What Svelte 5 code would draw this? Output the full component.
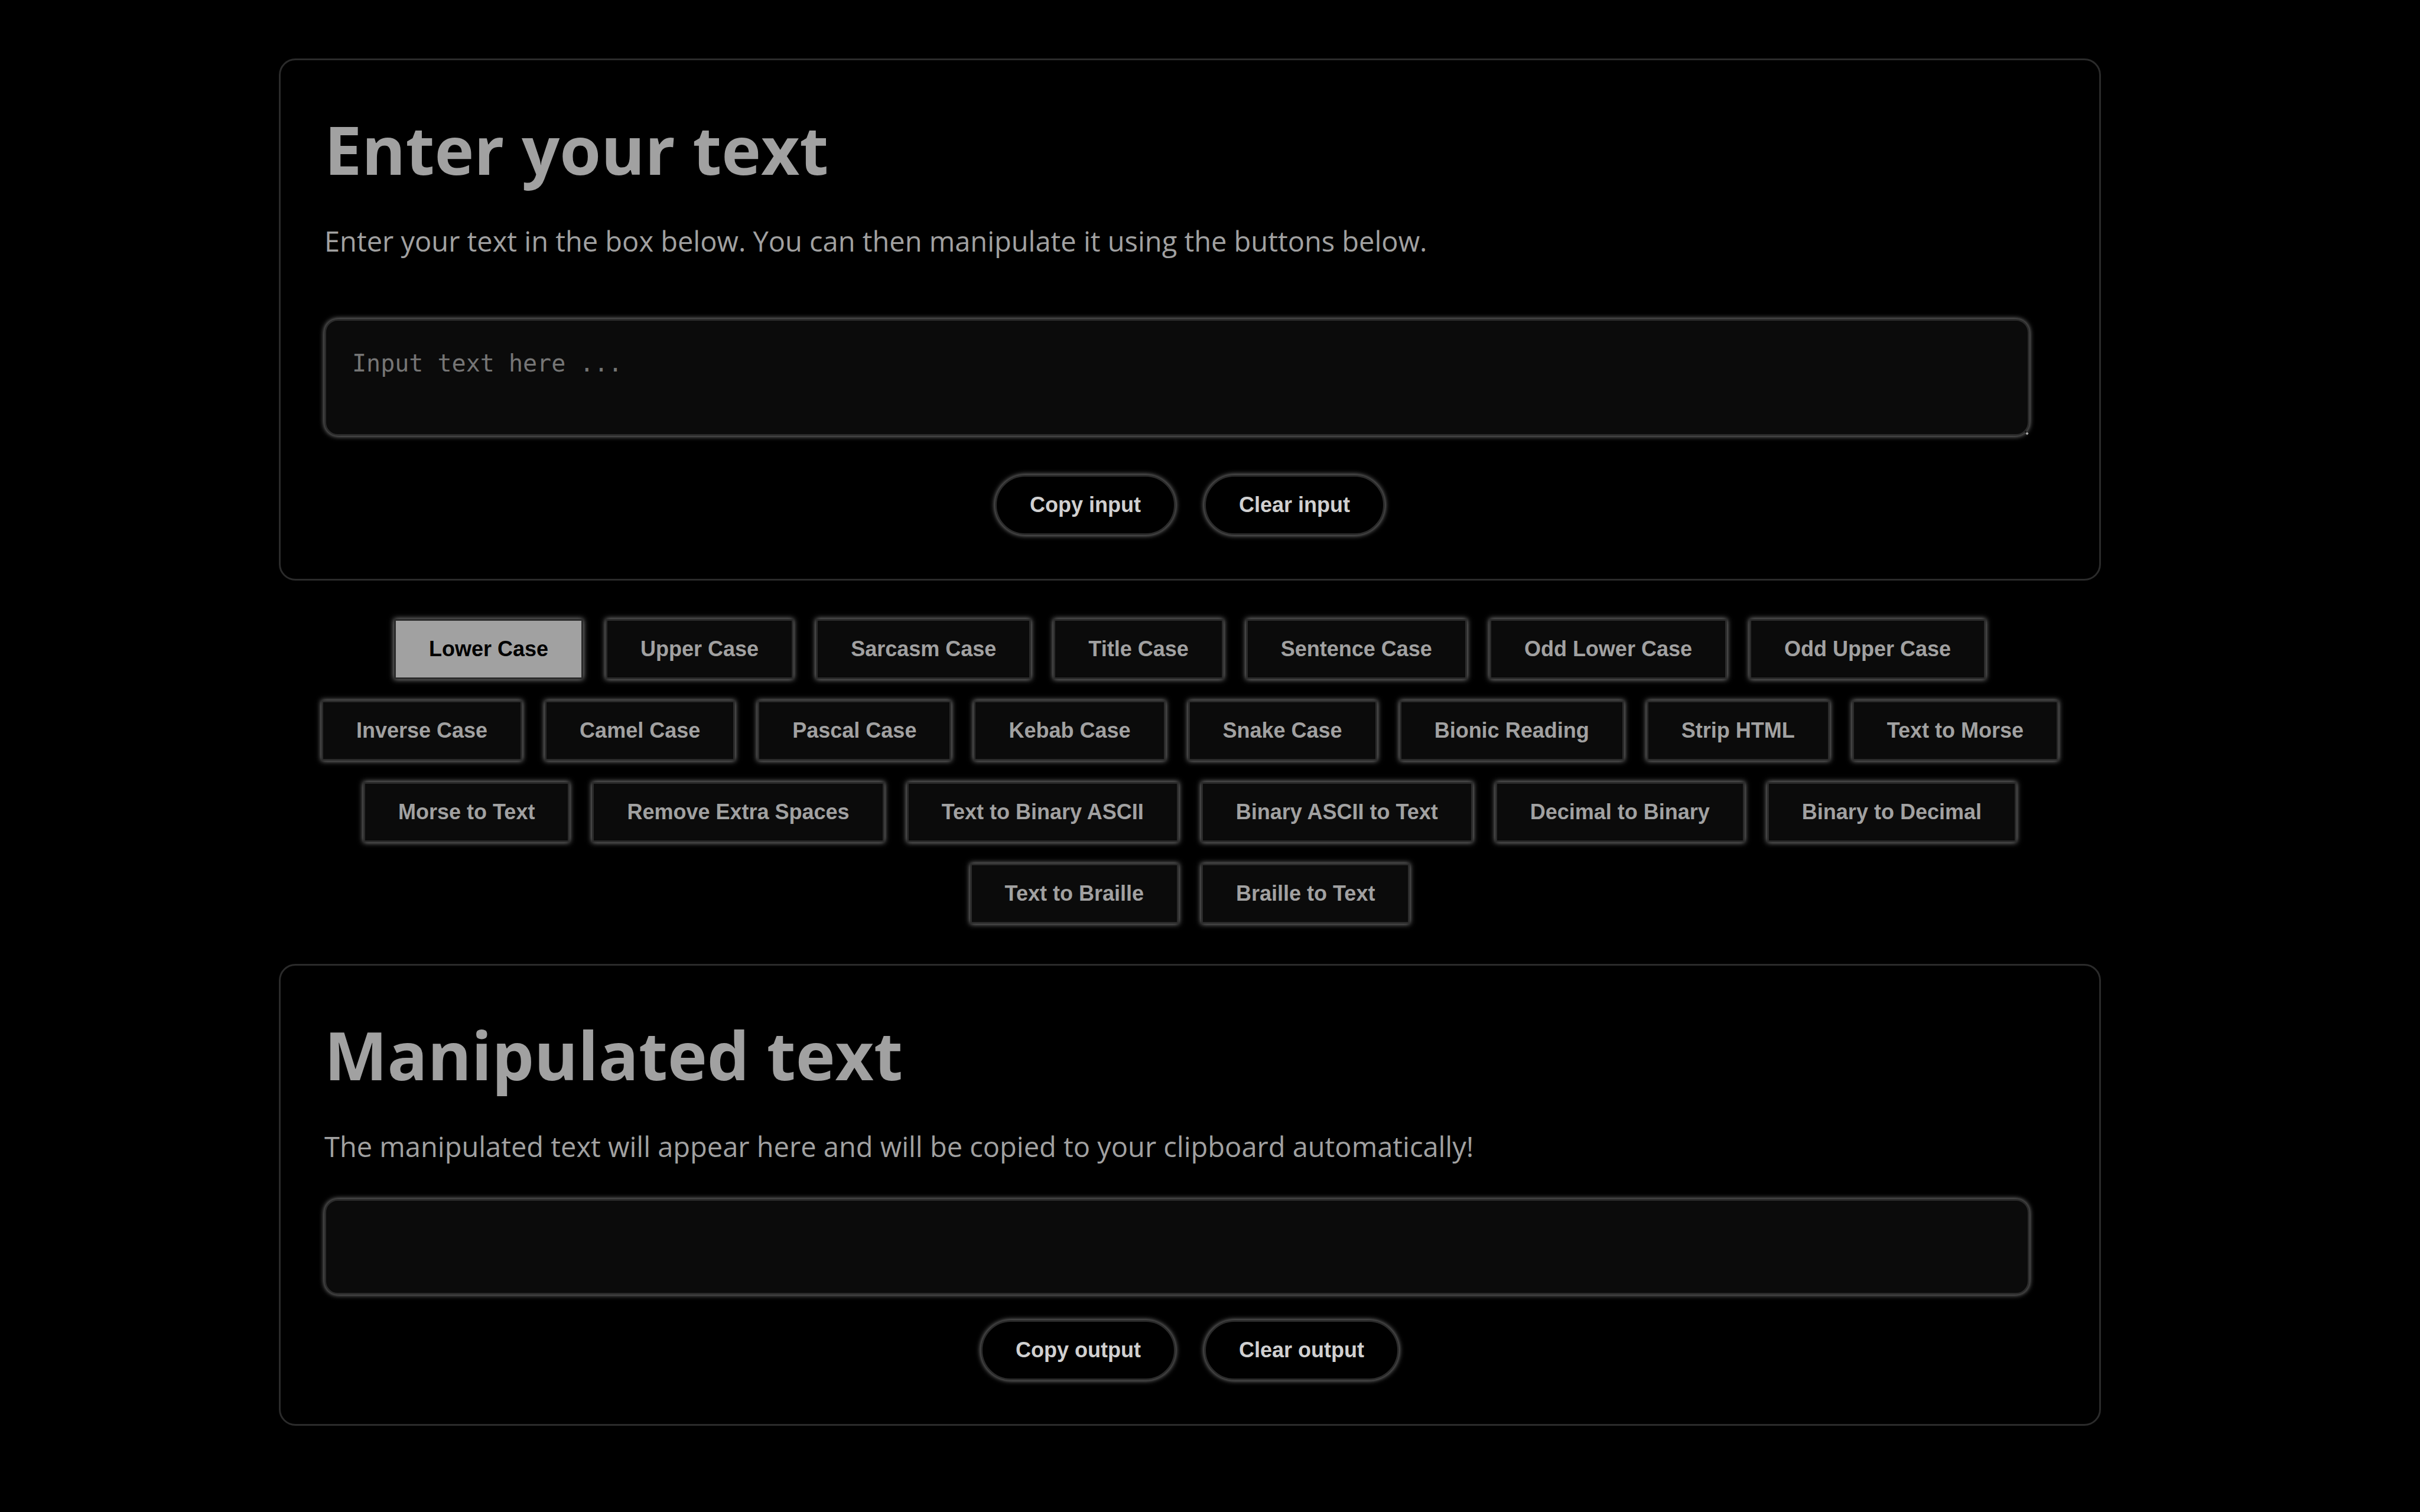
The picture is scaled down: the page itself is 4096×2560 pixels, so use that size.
<script>
  const operations = [
    'Lower Case', 'Upper Case', 'Sarcasm Case', 'Title Case', 'Sentence Case',
    'Odd Lower Case', 'Odd Upper Case', 'Inverse Case', 'Camel Case',
    'Pascal Case', 'Kebab Case', 'Snake Case', 'Bionic Reading', 'Strip HTML',
    'Text to Morse', 'Morse to Text', 'Remove Extra Spaces',
    'Text to Binary ASCII', 'Binary ASCII to Text', 'Decimal to Binary',
    'Binary to Decimal', 'Text to Braille', 'Braille to Text'
  ];
  let active = $state('Lower Case');
  let input = $state('');
  let output = $state('');
</script>

<main>
  <section class="panel">
    <h1><label for="source">Enter your text</label></h1>
    <p>Enter your text in the box below. You can then manipulate it using the buttons below.</p>
    <div class="field source">
      <textarea id="source" placeholder="Input text here ..." bind:value={input}></textarea>
      <svg class="grip" viewBox="0 0 8 8" aria-hidden="true">
        <path d="M1.5 -1L3.5 1L1.5 3.5L-0.5 1Z" fill="#161616" />
        <path d="M4 1.5L6.5 4L4 6.5L1.5 4Z" fill="#a9a9a9" />
      </svg>
    </div>
    <div class="actions">
      <button class="pill" onclick={() => navigator.clipboard?.writeText(input)}>Copy input</button>
      <button class="pill" onclick={() => (input = '')}>Clear input</button>
    </div>
  </section>

  <div class="operations">
    {#each operations as name}
      <button class="operation" class:active={active === name} onclick={() => (active = name)}>{name}</button>
    {/each}
  </div>

  <section class="panel">
    <h1><label for="result">Manipulated text</label></h1>
    <p>The manipulated text will appear here and will be copied to your clipboard automatically!</p>
    <div class="field result">
      <textarea id="result" readonly value={output}></textarea>
    </div>
    <div class="actions">
      <button class="pill" onclick={() => navigator.clipboard?.writeText(output)}>Copy output</button>
      <button class="pill" onclick={() => (output = '')}>Clear output</button>
    </div>
  </section>
</main>

<style>
  :global(html),
  :global(body) {
    background: #000;
  }
  main {
    box-sizing: border-box;
    min-height: 100vh;
    padding: 99px 540px 99px 472px;
    color: #a1a1a1;
    font-family: 'Segoe UI', 'Open Sans', 'Noto Sans', sans-serif;
  }
  .panel {
    border: 3px solid #2b2b2b;
    border-radius: 28px;
    padding: 70px 74px 74px;
  }
  h1 {
    margin: 0;
    font-size: 113px;
    line-height: 160px;
    font-weight: 700;
  }
  p {
    margin: 40px 0 0;
    font-size: 47px;
    line-height: 72px;
  }
  .field {
    position: relative;
    display: flex;
    margin-right: 44px;
  }
  .source {
    height: 198px;
    margin-top: 96px;
  }
  .result {
    height: 162px;
    margin-top: 53px;
  }
  textarea {
    box-sizing: border-box;
    flex: 1;
    border: 3px solid #2b2b2b;
    border-radius: 23px;
    padding: 48px 44px;
    background: #0b0b0b;
    color: #a1a1a1;
    box-shadow: 0 0 9px #a1a1a1;
    font: 40px/48px 'DejaVu Sans Mono', monospace;
    resize: none;
    overflow: hidden;
    outline: none;
  }
  textarea::placeholder {
    color: #757575;
    opacity: 1;
  }
  .grip {
    position: absolute;
    right: 0;
    bottom: 0;
    width: 8px;
    height: 8px;
    overflow: visible;
  }
  .actions {
    display: flex;
    justify-content: center;
    gap: 48px;
    margin-top: 66px;
  }
  .result + .actions {
    margin-top: 43px;
  }
  button {
    box-sizing: border-box;
    height: 102px;
    margin: 0;
    padding: 0 56px;
    border: 3px solid #2b2b2b;
    box-shadow: 0 0 9px #a1a1a1;
    font: 700 36px/40px 'Liberation Sans', Arial, sans-serif;
    white-space: nowrap;
    cursor: pointer;
  }
  .pill {
    border-radius: 51px;
    background: #000;
    color: #d0d0d0;
  }
  .operations {
    display: flex;
    flex-wrap: wrap;
    justify-content: center;
    gap: 36px 38px;
    padding: 65px 60px 68px;
  }
  .operation {
    border-radius: 0;
    background: #0b0b0b;
    color: #a1a1a1;
  }
  .operation.active {
    background: #a1a1a1;
    color: #000;
  }
</style>
